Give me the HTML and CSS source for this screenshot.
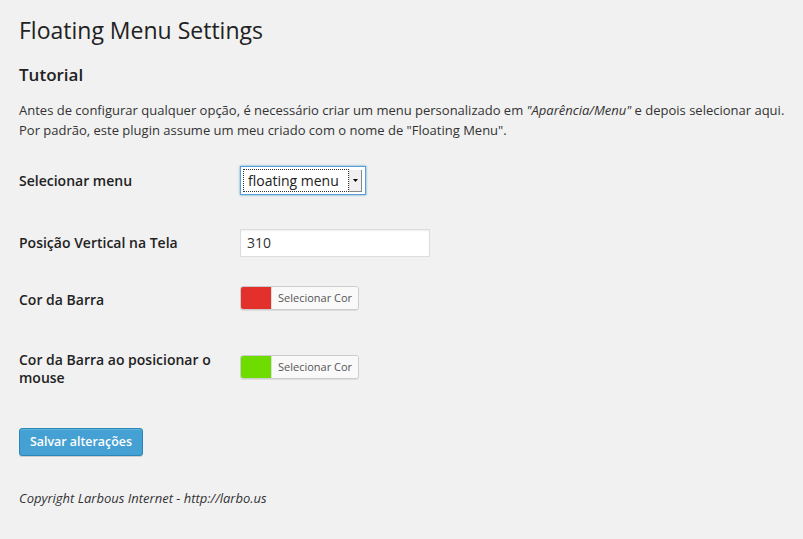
FILE: index.html
```html
<!DOCTYPE html>
<html lang="pt">
<head>
<meta charset="utf-8">
<title>Floating Menu Settings</title>
<link rel="stylesheet" href="styles.css">
</head>
<body>
<div class="wrap">
  <h1 class="title">Floating Menu Settings</h1>
  <h2 class="subtitle">Tutorial</h2>
  <p class="intro">Antes de configurar qualquer opção, é necessário criar um menu personalizado em <em>"Aparência/Menu"</em> e depois selecionar aqui.<br>Por padrão, este plugin assume um meu criado com o nome de "Floating Menu".</p>

  <div class="form">
    <div class="row row-select">
      <div class="label">Selecionar menu</div>
      <div class="field">
        <div class="select">
          <span class="select-text">floating menu</span>
          <span class="select-arrow"><svg width="5" height="3" viewBox="0 0 5 3"><path d="M0 0h5L2.5 3z" fill="#000"/></svg></span>
        </div>
      </div>
    </div>
    <div class="row row-input">
      <div class="label">Posição Vertical na Tela</div>
      <div class="field"><div class="input">310</div></div>
    </div>
    <div class="row row-color1">
      <div class="label">Cor da Barra</div>
      <div class="field">
        <div class="color-btn"><span class="swatch swatch-red"></span><span class="color-text">Selecionar Cor</span></div>
      </div>
    </div>
    <div class="row row-color2">
      <div class="label">Cor da Barra ao posicionar o mouse</div>
      <div class="field">
        <div class="color-btn"><span class="swatch swatch-green"></span><span class="color-text">Selecionar Cor</span></div>
      </div>
    </div>
  </div>

  <div class="submit"><span class="button-primary">Salvar alterações</span></div>
  <p class="copyright">Copyright Larbous Internet - http://larbo.us</p>
</div>
</body>
</html>
```
FILE: styles.css
```css
html, body {
  margin: 0;
  padding: 0;
  background: #f1f1f1;
}
body {
  font-family: "Open Sans", "Liberation Sans", sans-serif;
  color: #444;
  width: 803px;
  height: 539px;
  overflow: hidden;
}
.wrap {
  padding: 0 0 0 19px;
}
.title {
  margin: 16px 0 0;
  font-size: 23px;
  line-height: 29px;
  font-weight: 400;
  color: #222;
}
.subtitle {
  margin: 18px 0 0;
  font-size: 17px;
  line-height: 24px;
  font-weight: 600;
  color: #222;
}
.intro {
  margin: 13px 0 0;
  font-size: 13px;
  line-height: 20px;
  color: #333;
}
.intro em {
  font-style: italic;
}
.form {
  margin-top: 26px;
  display: flex;
  flex-direction: column;
}
.row {
  display: grid;
  grid-template-columns: 221px 1fr;
  align-items: center;
}
.row-input { margin-top: 34px; }
.row-color1 { margin-top: 29px; }
.row-color2 { margin-top: 37px; }
.label {
  font-size: 14px;
  line-height: 18px;
  font-weight: 600;
  color: #222;
  width: 200px;
}
.select {
  width: 126px;
  height: 29px;
  box-sizing: border-box;
  border: 1px solid #5b9dd9;
  box-shadow: 0 0 2px rgba(30,140,190,.8);
  background: #fff;
  display: flex;
  align-items: center;
  padding: 2px 3px 2px 2px;
}
.select-text {
  flex: 1;
  height: 23px;
  box-sizing: border-box;
  border: 1px dotted #333;
  font-size: 14px;
  line-height: 21px;
  color: #222;
  padding-left: 4px;
}
.select-arrow {
  width: 13px;
  height: 22px;
  box-sizing: border-box;
  background: #f0f0f0;
  border-right: 1px solid #888;
  border-bottom: 1px solid #888;
  border-left: 1px solid #ddd;
  display: flex;
  align-items: center;
  justify-content: center;
}
.input {
  width: 190px;
  height: 28px;
  box-sizing: border-box;
  border: 1px solid #ddd;
  box-shadow: inset 0 1px 2px rgba(0,0,0,.07);
  background: #fff;
  font-size: 14px;
  line-height: 26px;
  padding-left: 6px;
  color: #333;
}
.color-btn {
  display: inline-flex;
  height: 24px;
  box-sizing: border-box;
  border: 1px solid #ccc;
  border-radius: 3px;
  background: #f7f7f7;
  box-shadow: 0 1px 0 rgba(0,0,0,.08);
  overflow: hidden;
}
.swatch {
  width: 30px;
  height: 100%;
}
.swatch-red { background: #e3302b; }
.swatch-green { background: #6fdc00; }
.color-text {
  background: #f9f9f9;
  border-left: 1px solid #ddd;
  font-size: 11px;
  line-height: 22px;
  padding: 0 6px;
  color: #555;
}
.submit {
  margin-top: 41px;
}
.button-primary {
  display: inline-block;
  height: 28px;
  box-sizing: border-box;
  padding: 0 10px;
  background: #45a1d3;
  border: 1px solid #2a86b5;
  border-radius: 3px;
  box-shadow: inset 0 1px 0 rgba(120,200,230,.5), 0 1px 0 rgba(0,0,0,.15);
  color: #fff;
  font-size: 12.4px;
  line-height: 26px;
  font-weight: 600;
}
.copyright {
  margin: 32px 0 0;
  font-size: 13px;
  font-style: italic;
  line-height: 20px;
  color: #333;
}
```
